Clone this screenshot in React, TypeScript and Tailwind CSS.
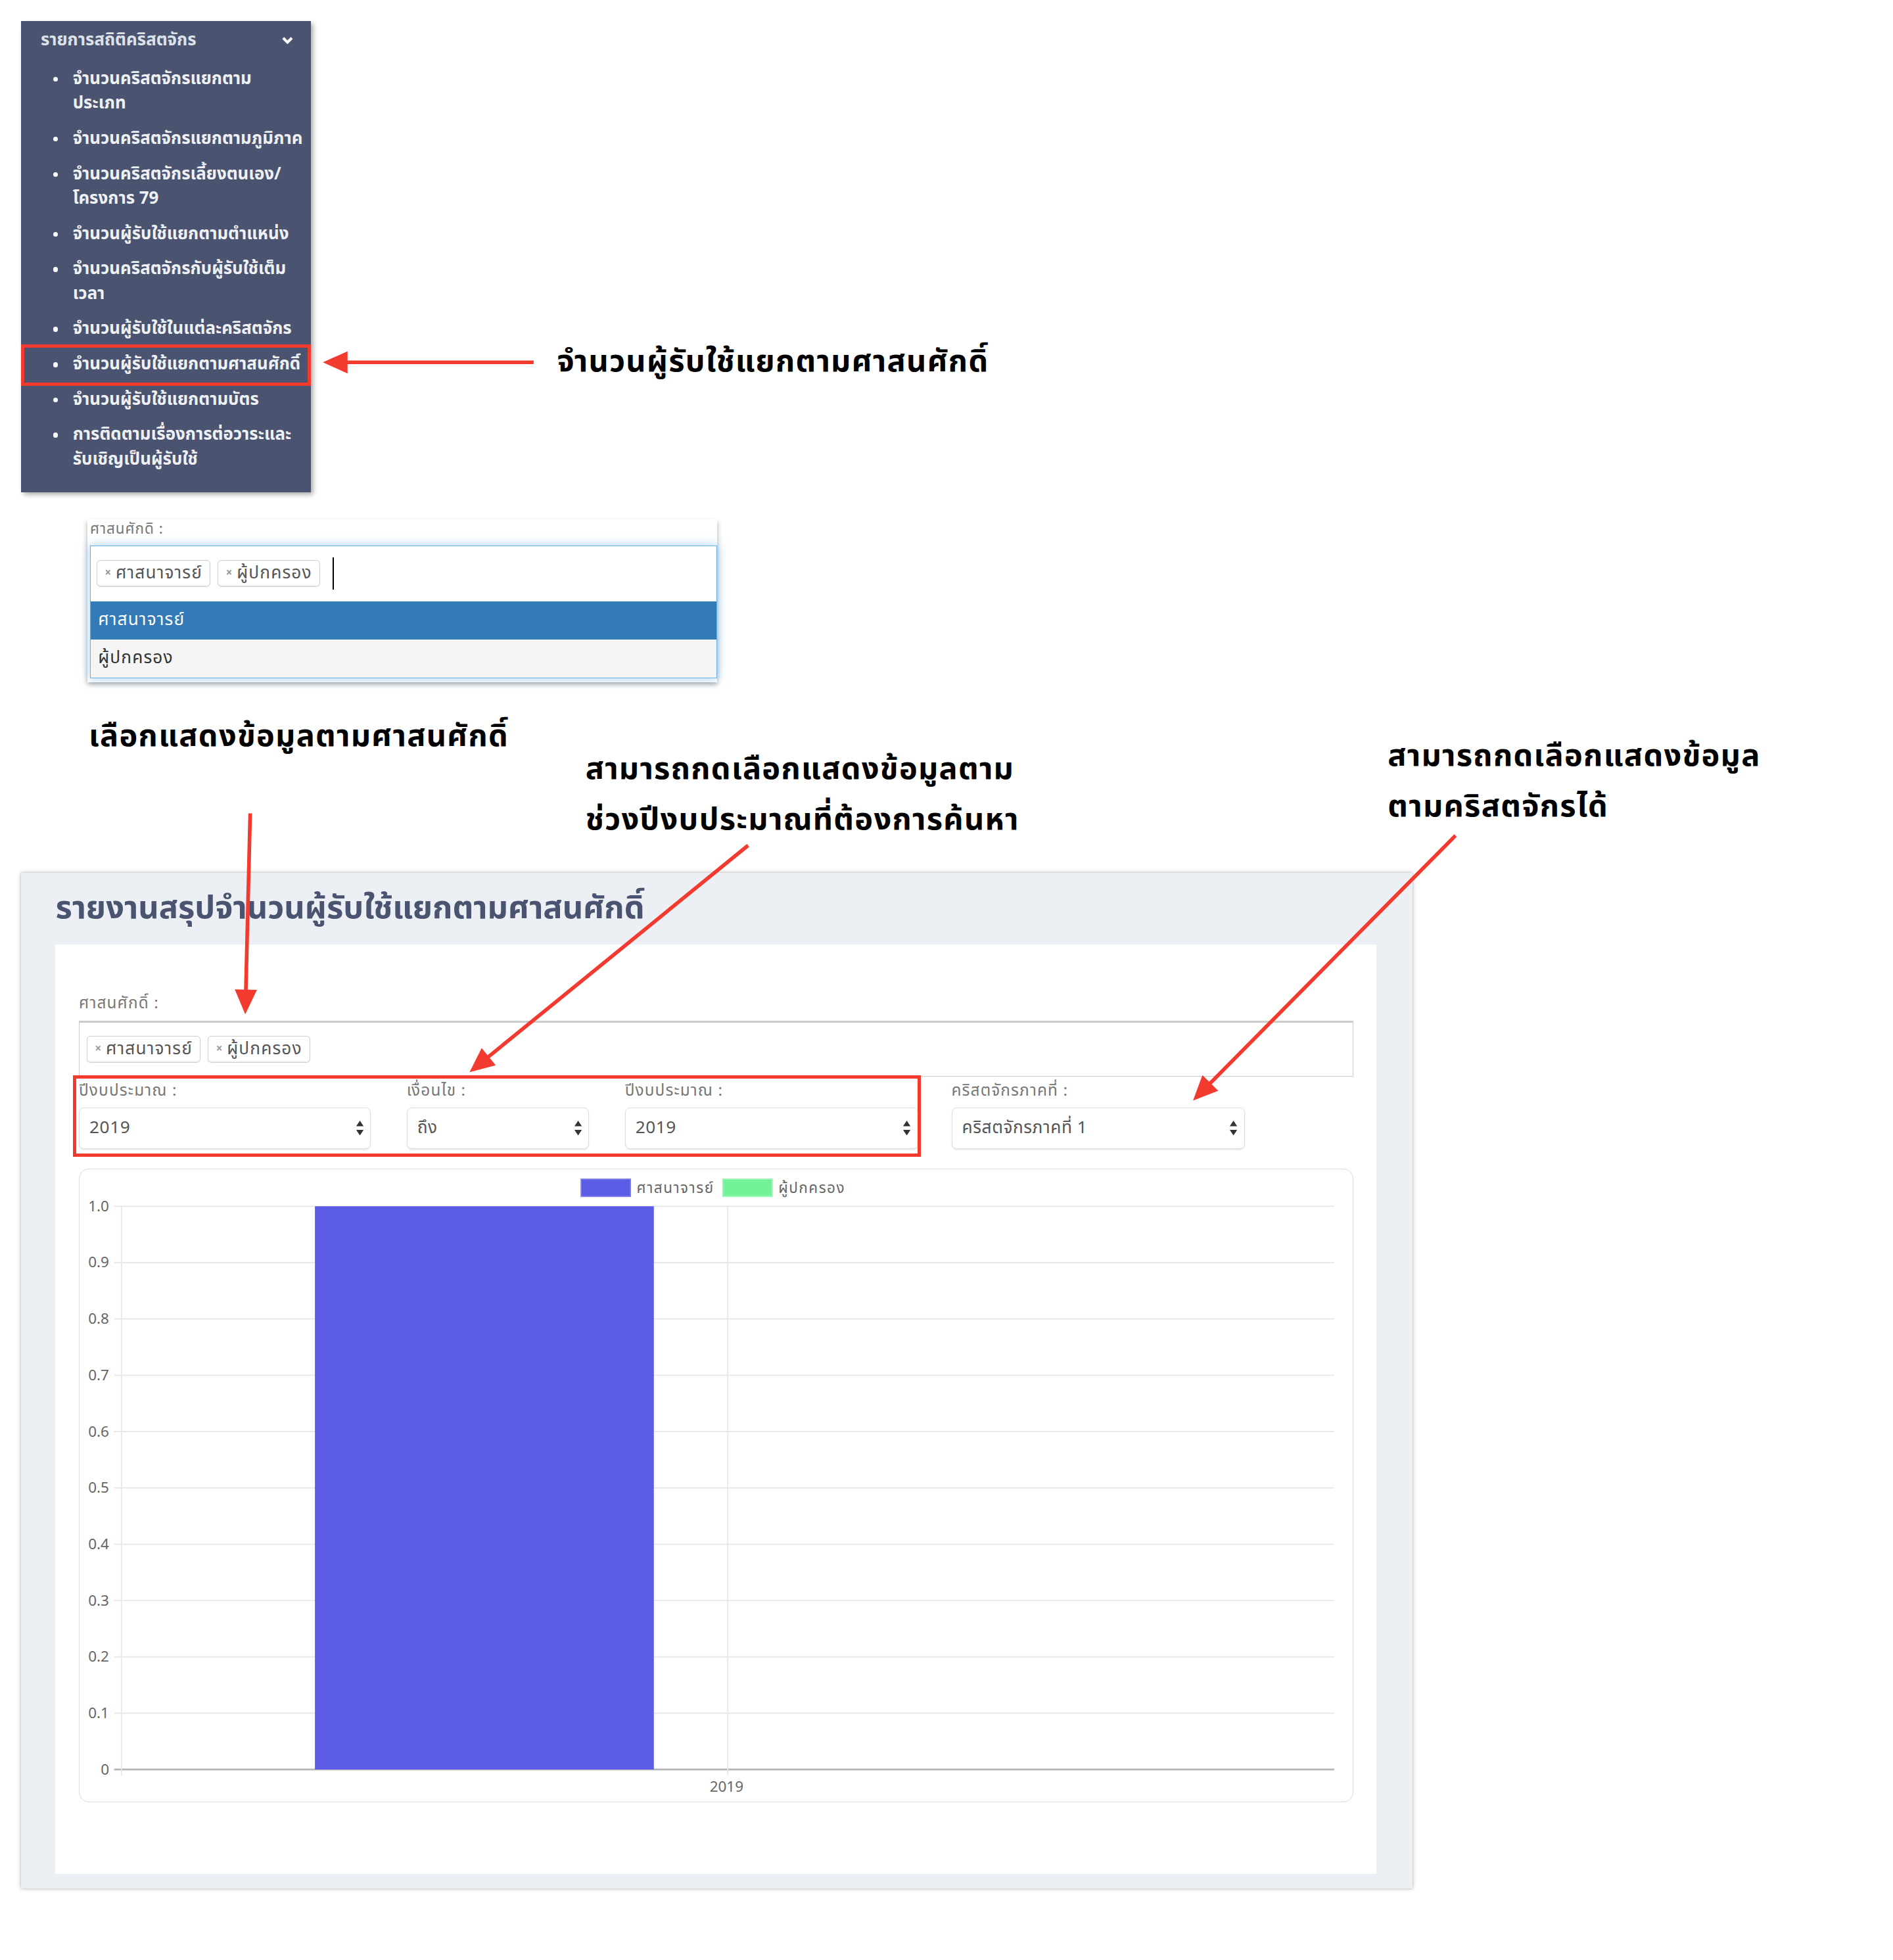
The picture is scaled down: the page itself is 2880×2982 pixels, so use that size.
import React from 'react'

const RED = '#f23a2e'

const menuItems: { lines: string[]; active?: boolean }[] = [
  { lines: ['จำนวนคริสตจักรแยกตาม', 'ประเภท'] },
  { lines: ['จำนวนคริสตจักรแยกตามภูมิภาค'] },
  { lines: ['จำนวนคริสตจักรเลี้ยงตนเอง/', 'โครงการ 79'] },
  { lines: ['จำนวนผู้รับใช้แยกตามตำแหน่ง'] },
  { lines: ['จำนวนคริสตจักรกับผู้รับใช้เต็ม', 'เวลา'] },
  { lines: ['จำนวนผู้รับใช้ในแต่ละคริสตจักร'] },
  { lines: ['จำนวนผู้รับใช้แยกตามศาสนศักดิ์'], active: true },
  { lines: ['จำนวนผู้รับใช้แยกตามบัตร'] },
  { lines: ['การติดตามเรื่องการต่อวาระและ', 'รับเชิญเป็นผู้รับใช้'] },
]

function Sidebar() {
  return (
    <div className="w-[235px] bg-[#4a5470] pt-[6px] pb-[12px] shadow-[2px_2px_4px_rgba(0,0,0,0.35)] text-[13.8px] font-bold text-[#eef0f4]">
      <div className="flex items-center justify-between pl-[16px] pr-[14px] leading-[20px] text-[#dde1e9]">
        <span>รายการสถิติคริสตจักร</span>
        <svg width="10" height="7" viewBox="0 0 10 7">
          <polyline points="1.5,1.5 5,5 8.5,1.5" fill="none" stroke="#ffffff" strokeWidth="2.2" />
        </svg>
      </div>
      <ul className="mt-[7px]">
        {menuItems.map((item, i) => (
          <li key={i} className="relative flex py-[4.3px] pl-[26px] leading-[20px]">
            <span className="mt-[8px] h-[4px] w-[4px] shrink-0 rounded-full bg-white" />
            <span className="ml-[12px] whitespace-nowrap">
              {item.lines.map((l, j) => (
                <span key={j} className="block">{l}</span>
              ))}
            </span>
            {item.active && (
              <span className="absolute inset-x-0 -top-[2px] -bottom-[3px] border-[3px] border-[#f23a2e]" />
            )}
          </li>
        ))}
      </ul>
    </div>
  )
}

function Tag({ label }: { label: string }) {
  return (
    <span className="flex h-[22px] items-center rounded-[3px] border border-[#cccccc] bg-white px-[6px] text-[14px] tracking-[0.6px] text-[#555555] shadow-[inset_0_-1px_0_rgba(0,0,0,0.06)]">
      <span className="mr-[3px] text-[9px] font-bold text-[#999999]">×</span>
      {label}
    </span>
  )
}

function SelectBox({ value, width }: { value: string; width: string }) {
  return (
    <div className={`flex h-[34px] items-center justify-between rounded-[4px] border border-[#dddddd] bg-white pl-[8px] pr-[5px] text-[14px] tracking-[0.3px] text-[#555555] shadow-[0_1px_1px_rgba(0,0,0,0.08)] ${width}`}>
      <span>{value}</span>
      <svg width="7" height="13" viewBox="0 0 7 13">
        <polygon points="3.5,0.5 6.5,5 0.5,5" fill="#333333" />
        <polygon points="3.5,12.5 6.5,8 0.5,8" fill="#333333" />
      </svg>
    </div>
  )
}

function Field({ label, children, className = '' }: { label: string; children: React.ReactNode; className?: string }) {
  return (
    <div className={className}>
      <div className="h-[16px] text-[13px] leading-[16px] tracking-[0.6px] text-[#777777]">{label}</div>
      <div className="mt-[5px]">{children}</div>
    </div>
  )
}

function Chart() {
  const top = 30
  const bottom = 487
  const ticks = ['1.0', '0.9', '0.8', '0.7', '0.6', '0.5', '0.4', '0.3', '0.2', '0.1', '0']
  const step = (bottom - top) / 10
  return (
    <svg width="1034" height="513" viewBox="0 0 1034 513" className="block">
      <rect x="407" y="8" width="40" height="14" fill="#5b5be6" stroke="#7d7df0" strokeWidth="1" />
      <text x="452" y="19" fontSize="12" letterSpacing="0.8" fill="#666666">ศาสนาจารย์</text>
      <rect x="522" y="8" width="40" height="14" fill="#74f29a" stroke="#9af5b5" strokeWidth="1" />
      <text x="567" y="19" fontSize="12" letterSpacing="0.8" fill="#666666">ผู้ปกครอง</text>
      {ticks.map((t, i) => {
        const y = top + i * step
        return (
          <g key={t}>
            <line x1="28" x2="1018" y1={y} y2={y} stroke={i === 10 ? '#b5b5b5' : '#e8e8e8'} strokeWidth={i === 10 ? 1.5 : 1} />
            <text x="24" y={y + 4} fontSize="12" fill="#666666" textAnchor="end">{t}</text>
          </g>
        )
      })}
      <line x1="34" x2="34" y1={top} y2={bottom + 5} stroke="#e8e8e8" />
      <line x1="526" x2="526" y1={top} y2={bottom + 5} stroke="#e8e8e8" />
      <rect x="191" y={top} width="275" height={bottom - top} fill="#5b5be6" />
      <text x="525" y="505" fontSize="12" fill="#666666" textAnchor="middle">2019</text>
    </svg>
  )
}

function arrowHead(x1: number, y1: number, x2: number, y2: number, len = 20, half = 9) {
  const dx = x2 - x1
  const dy = y2 - y1
  const d = Math.hypot(dx, dy)
  const ux = dx / d
  const uy = dy / d
  const bx = x2 - ux * len
  const by = y2 - uy * len
  return {
    line: { x1, y1, x2: bx + ux * 2, y2: by + uy * 2 },
    points: `${x2},${y2} ${bx - uy * half},${by + ux * half} ${bx + uy * half},${by - ux * half}`,
  }
}

function Arrows() {
  const arrows = [
    arrowHead(433, 294, 262, 294),
    arrowHead(203, 660, 199, 823),
    arrowHead(607, 686, 381, 870),
    arrowHead(1181, 678, 968, 893),
  ]
  return (
    <svg className="pointer-events-none absolute left-0 top-0" width="1536" height="1590" viewBox="0 0 1536 1590">
      {arrows.map((a, i) => (
        <g key={i}>
          <line {...a.line} stroke={RED} strokeWidth="3" />
          <polygon points={a.points} fill={RED} />
        </g>
      ))}
    </svg>
  )
}

export default function App() {
  return (
    <div className="relative h-[1590px] w-[1536px] overflow-hidden bg-white font-['Noto_Sans_Thai','Noto_Sans','Open_Sans',sans-serif] [zoom:1.875]">
      <div className="flex items-start pl-[17px] pt-[17px]">
        <Sidebar />
        <div className="ml-[200px] mt-[261px] flex h-[32px] items-center text-[25px] font-bold tracking-[0.7px] text-black">
          จำนวนผู้รับใช้แยกตามศาสนศักดิ์
        </div>
      </div>

      <div className="ml-[71px] mt-[22px] w-[511px] bg-white pb-[3px] shadow-[0_2px_4px_rgba(0,0,0,0.35)]">
        <div className="h-[21px] pl-[2px] text-[12px] leading-[16px] tracking-[0.5px] text-[#777777]">ศาสนศักดิ :</div>
        <div className="ml-[2px] border border-[#66afe9] shadow-[0_0_8px_rgba(102,175,233,0.6)]">
          <div className="flex h-[45px] items-center gap-[6px] bg-white pl-[5px]">
            <Tag label="ศาสนาจารย์" />
            <Tag label="ผู้ปกครอง" />
            <span className="ml-[4px] h-[26px] w-[1px] bg-black" />
          </div>
          <div className="flex h-[31px] items-center bg-[#337ab7] pl-[6px] text-[14px] tracking-[0.6px] text-white">ศาสนาจารย์</div>
          <div className="flex h-[31px] items-center bg-[#f5f5f5] pl-[6px] text-[14px] tracking-[0.6px] text-[#333333]">ผู้ปกครอง</div>
        </div>
      </div>

      <div className="flex h-[155px] items-start text-[25px] font-bold leading-[41px] tracking-[0.7px] text-black">
        <div className="ml-[72px] mt-[24px] w-[403px]">เลือกแสดงข้อมูลตามศาสนศักดิ์</div>
        <div className="mt-[51px] w-[651px]">
          <div>สามารถกดเลือกแสดงข้อมูลตาม</div>
          <div>ช่วงปีงบประมาณที่ต้องการค้นหา</div>
        </div>
        <div className="mt-[40px]">
          <div>สามารถกดเลือกแสดงข้อมูล</div>
          <div>ตามคริสตจักรได้</div>
        </div>
      </div>

      <div className="ml-[17px] h-[824px] w-[1129px] bg-[#ecf0f5] pl-[28px] pt-[11px] shadow-[0_0_3px_rgba(0,0,0,0.35)]">
        <h1 className="h-[36px] text-[26px] font-bold leading-[36px] text-[#4a5470]">
          รายงานสรุปจำนวนผู้รับใช้แยกตามศาสนศักดิ์
        </h1>
        <div className="mt-[11px] h-[754px] w-[1072px] bg-white px-[19px] pt-[40px]">
          <div className="h-[16px] text-[13px] leading-[16px] tracking-[0.6px] text-[#777777]">ศาสนศักดิ์ :</div>
          <div className="mt-[6px] flex h-[45px] w-[1034px] items-center gap-[6px] border border-[#cccccc] border-t-2 pl-[6px]">
            <Tag label="ศาสนาจารย์" />
            <Tag label="ผู้ปกครอง" />
          </div>

          <div className="mt-[4px] flex items-start">
            <div className="relative flex">
              <Field label="ปีงบประมาณ :">
                <SelectBox value="2019" width="w-[237px]" />
              </Field>
              <Field label="เงื่อนไข :" className="ml-[29px]">
                <SelectBox value="ถึง" width="w-[148px]" />
              </Field>
              <Field label="ปีงบประมาณ :" className="ml-[29px]">
                <SelectBox value="2019" width="w-[238px]" />
              </Field>
              <span className="absolute -left-[5px] -right-[2px] -top-[5px] -bottom-[6px] border-[3px] border-[#f23a2e]" />
            </div>
            <Field label="คริสตจักรภาคที่ :" className="ml-[27px]">
              <SelectBox value="คริสตจักรภาคที่ 1" width="w-[238px]" />
            </Field>
          </div>

          <div className="mt-[16px] w-[1034px] overflow-hidden rounded-[8px] border border-[#dddddd]">
            <Chart />
          </div>
        </div>
      </div>

      <Arrows />
    </div>
  )
}
